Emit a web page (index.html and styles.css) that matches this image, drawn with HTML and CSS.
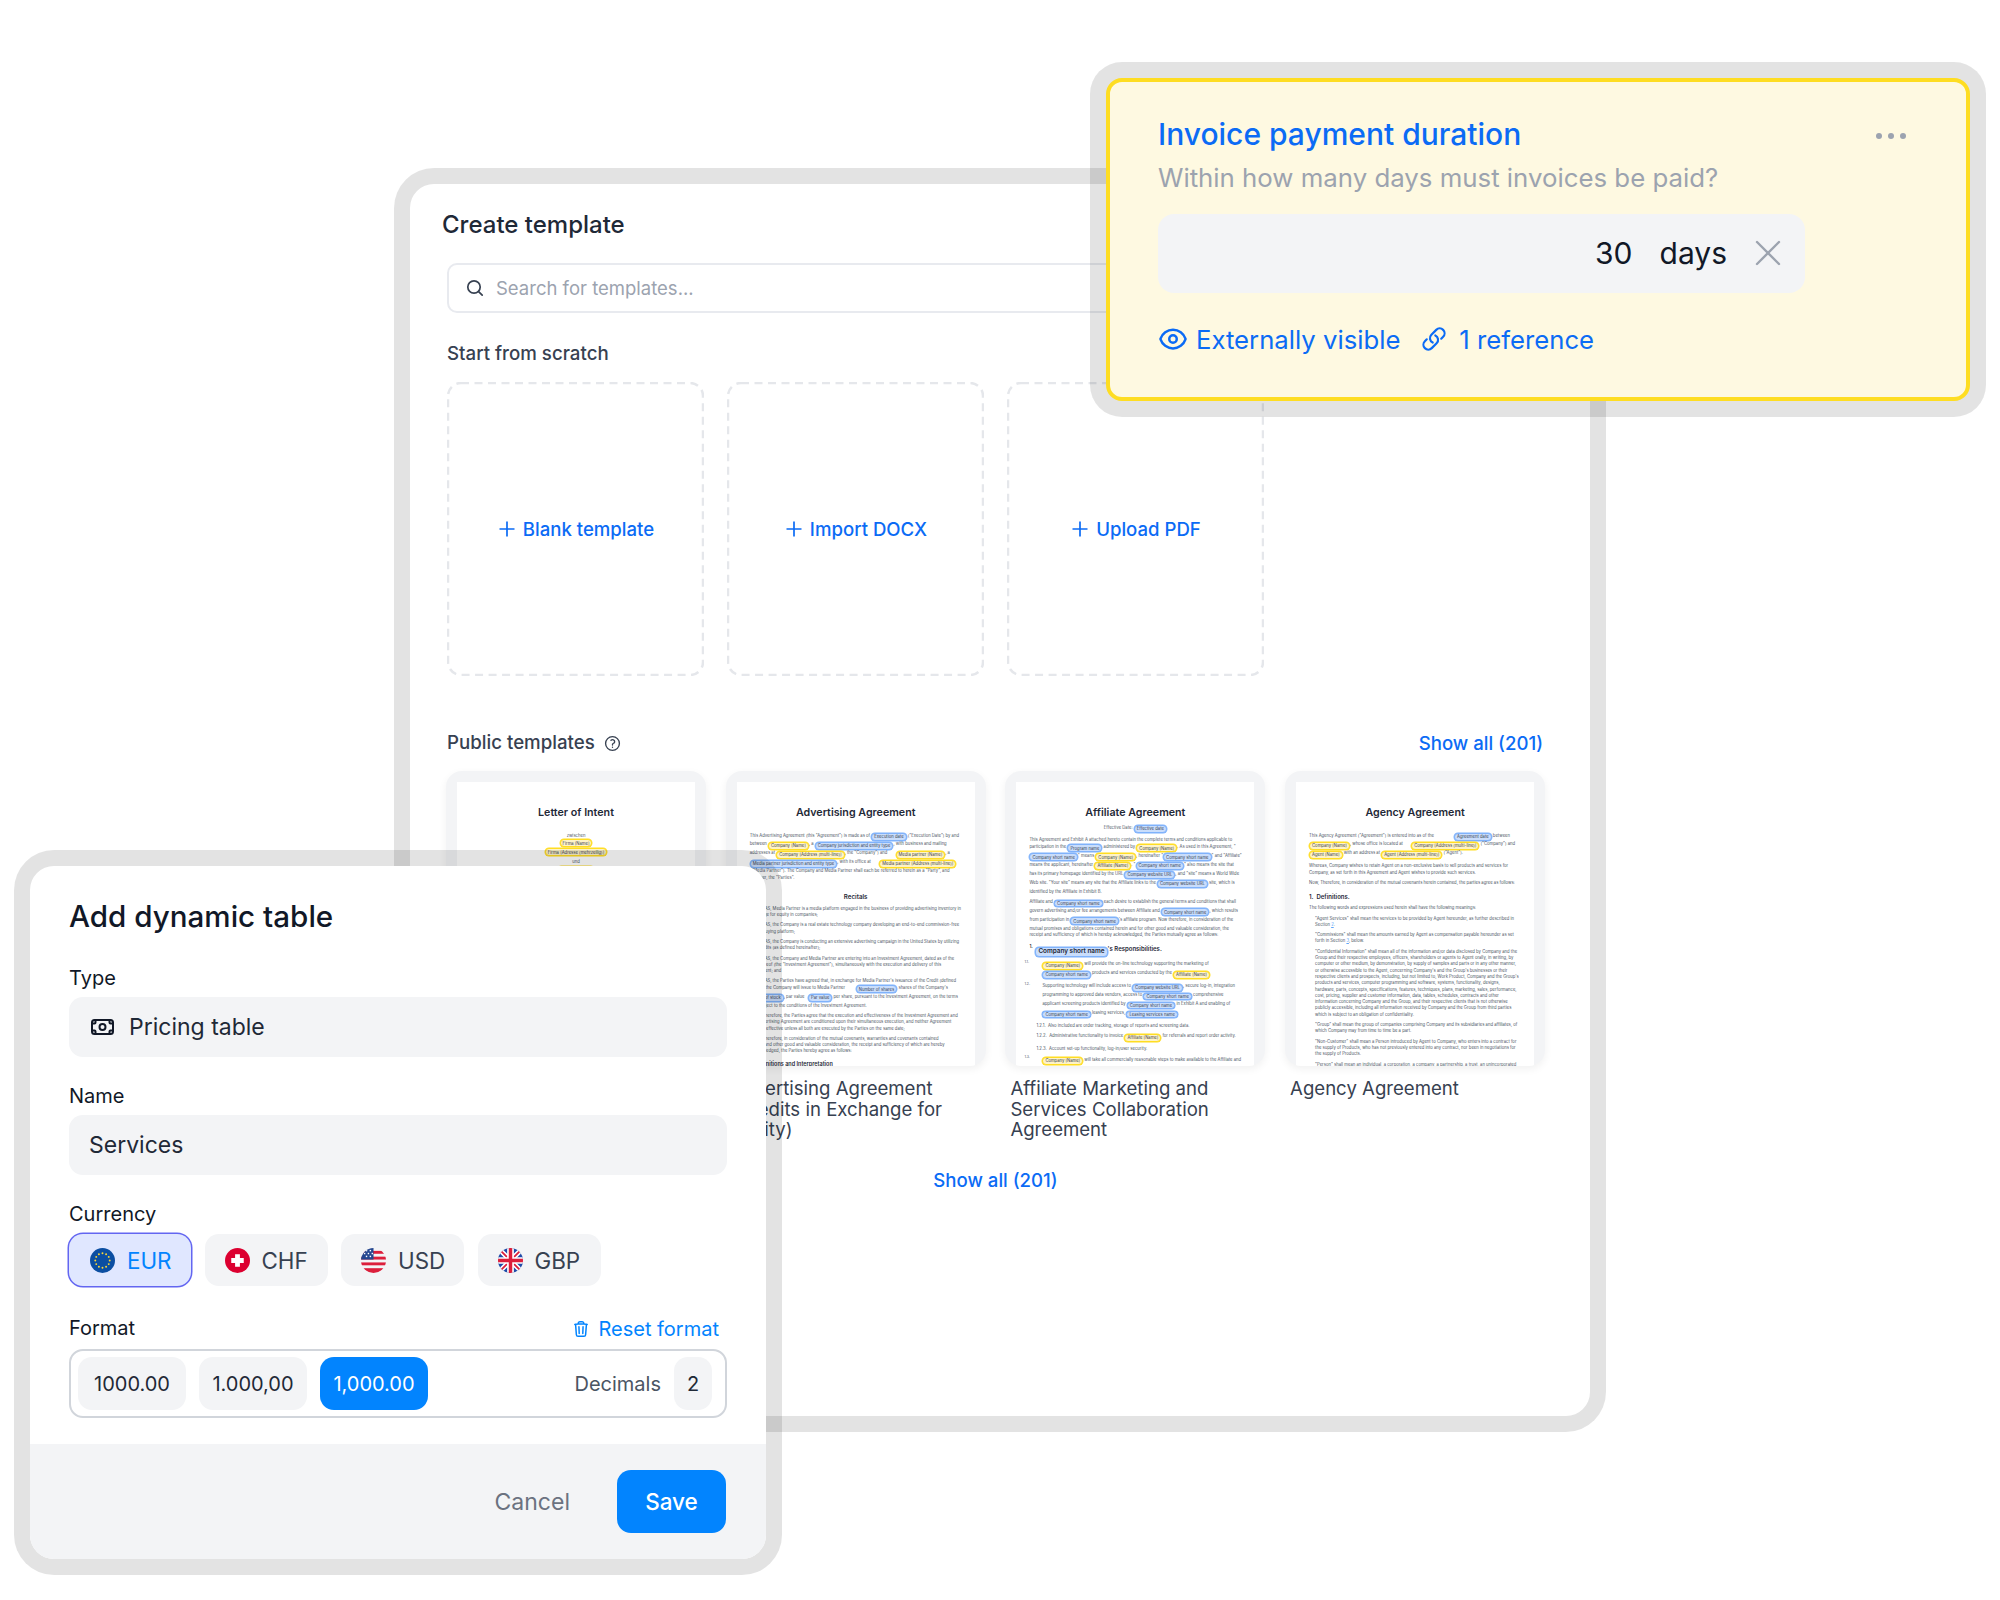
FILE: index.html
```html
<!DOCTYPE html>
<html lang="en">
<head>
<meta charset="UTF-8" />
<title>Create template</title>
<link rel="stylesheet" href="styles.css">
</head>
<body>
<div class="canvas">

  <!-- Create template window -->
  <section class="window create">
    <h2 class="create-title">Create template</h2>
    <div class="search">
      <svg class="search-icon" viewBox="0 0 20 20" fill="none" stroke="#374151" stroke-width="1.7" stroke-linecap="round"><circle cx="9" cy="9" r="6.2"/><path d="M13.6 13.6l3.6 3.6"/></svg>
      <span>Search for templates...</span>
    </div>

    <h3 class="section-label first">Start from scratch</h3>
    <div class="scratch-grid">
      <div class="scratch-card">
        <svg class="dash-frame" viewBox="0 0 257 294" fill="none"><rect x="1" y="1" width="255" height="292" rx="13"/></svg>
        <svg class="plus" viewBox="0 0 16 16" fill="none" stroke="currentColor" stroke-width="1.7"><path d="M8 0.5v15M0.5 8h15"/></svg>Blank template
      </div>
      <div class="scratch-card">
        <svg class="dash-frame" viewBox="0 0 257 294" fill="none"><rect x="1" y="1" width="255" height="292" rx="13"/></svg>
        <svg class="plus" viewBox="0 0 16 16" fill="none" stroke="currentColor" stroke-width="1.7"><path d="M8 0.5v15M0.5 8h15"/></svg>Import DOCX
      </div>
      <div class="scratch-card">
        <svg class="dash-frame" viewBox="0 0 257 294" fill="none"><rect x="1" y="1" width="255" height="292" rx="13"/></svg>
        <svg class="plus" viewBox="0 0 16 16" fill="none" stroke="currentColor" stroke-width="1.7"><path d="M8 0.5v15M0.5 8h15"/></svg>Upload PDF
      </div>
    </div>

    <div class="public-head">
      <h3 class="section-label">Public templates
        <svg class="help" viewBox="0 0 24 24" fill="none" stroke="#374151" stroke-width="1.9" stroke-linecap="round" stroke-linejoin="round"><circle cx="12" cy="12" r="9.75"/><path d="M9.879 7.519c1.171-1.025 3.071-1.025 4.242 0 1.172 1.025 1.172 2.687 0 3.712-.203.179-.43.326-.67.442-.745.361-1.45.999-1.45 1.827v.75M12 17.25h.008"/></svg>
      </h3>
      <a class="link">Show all (201)</a>
    </div>

    <div class="public-grid">
      <div class="template">
        <div class="thumb"><div class="doc center-doc">
          <h4>Letter of Intent</h4>
          <p class="between">zwischen<br><span class="chip y">Firma [Name]</span><br><span class="chip y">Firma [Adresse (mehrzeilig)]</span></p>
          <p class="und">und<br><span class="chip y">Partner [Name]</span></p>
        </div></div>
        <div class="caption">Letter of Intent</div>
      </div>

      <div class="template">
        <div class="thumb"><div class="doc">
          <h4>Advertising Agreement</h4>
          <p>This Advertising Agreement (this "Agreement") is made as of <span class="chip b">Execution date</span> ("Execution Date") by and<br>
          between <span class="chip y">Company [Name]</span>, a <span class="chip b">Company jurisdiction and entity type</span>, with business and mailing<br>
          addresses at <span class="chip y">Company [Address (multi-line)]</span>, the "Company") and &nbsp; &nbsp; &nbsp; <span class="chip y">Media partner [Name]</span>, a<br>
          <span class="chip b">Media partner jurisdiction and entity type</span>, with its office at &nbsp; &nbsp; &nbsp; <span class="chip y">Media partner [Address (multi-line)]</span><br>
          ("Media Partner"). The Company and Media Partner shall each be referred to herein as a "Party", and<br>
          together, the "Parties".</p>
          <h5>Recitals</h5>
          <p>WHEREAS, Media Partner is a media platform engaged in the business of providing advertising inventory in<br>exchange for equity in companies;</p>
          <p>WHEREAS, the Company is a real estate technology company developing an end-to-end commission-free<br>home-buying platform;</p>
          <p>WHEREAS, the Company is conducting an extensive advertising campaign in the United States by utilizing<br>the Credits (as defined hereinafter);</p>
          <p>WHEREAS, the Company and Media Partner are entering into an Investment Agreement, dated as of the<br>date hereof (the "Investment Agreement"), simultaneously with the execution and delivery of this<br>Agreement; and</p>
          <p>WHEREAS, the Parties have agreed that, in exchange for Media Partner's issuance of the Credit (defined<br>below), the Company will issue to Media Partner &nbsp; &nbsp; &nbsp; &nbsp; <span class="chip b">Number of shares</span> shares of the Company's<br>
          <span class="chip b">Class of stock</span>, par value &nbsp; <span class="chip b">Par value</span> per share, pursuant to the Investment Agreement, on the terms<br>and subject to the conditions of the Investment Agreement.</p>
          <p>NOW, Therefore, the Parties agree that the execution and effectiveness of the Investment Agreement and<br>the Advertising Agreement are conditioned upon their simultaneous execution, and neither Agreement<br>shall be effective unless all both are executed by the Parties on the same date;</p>
          <p>NOW, Therefore, in consideration of the mutual covenants, warranties and covenants contained<br>herein, and other good and valuable consideration, the receipt and sufficiency of which are hereby<br>acknowledged, the Parties hereby agree as follows:</p>
          <h6>1. Definitions and Interpretation</h6>
        </div></div>
        <div class="caption">Advertising Agreement (Credits in Exchange for Equity)</div>
      </div>

      <div class="template">
        <div class="thumb"><div class="doc">
          <h4 class="tight">Affiliate Agreement</h4>
          <p class="mid">Effective Date: <span class="chip b">Effective date</span></p>
          <p>This Agreement and Exhibit A attached hereto contain the complete terms and conditions applicable to<br>
          participation in the <span class="chip b">Program name</span> administered by <span class="chip y">Company [Name]</span>. As used in this Agreement, "<br>
          <span class="chip b">Company short name</span>" means <span class="chip y">Company [Name]</span>, hereinafter "<span class="chip b">Company short name</span>" and "Affiliate"<br>
          means the applicant, hereinafter <span class="chip y">Affiliate [Name]</span>. "<span class="chip b">Company short name</span>" also means the site that<br>
          has its primary homepage identified by the URL <span class="chip b">Company website URL</span>, and "site" means a World Wide<br>
          Web site. "Your site" means any site that the Affiliate links to the <span class="chip b">Company website URL</span> site, which is<br>
          identified by the Affiliate in Exhibit B.</p>
          <p>Affiliate and <span class="chip b">Company short name</span> each desire to establish the general terms and conditions that shall<br>
          govern advertising and/or fee arrangements between Affiliate and <span class="chip b">Company short name</span>, which results<br>
          from participation in <span class="chip b">Company short name</span>'s affiliate program. Now therefore, in consideration of the<br>
          mutual promises and obligations contained herein and for other good and valuable consideration, the<br>
          receipt and sufficiency of which is hereby acknowledged, the Parties mutually agree as follows:</p>
          <h6 class="sec"><sup class="num">1.</sup><span class="chip b big">Company short name</span>'s Responsibilities.</h6>
          <p class="ind1"><sup>1.1.</sup><span class="chip y">Company [Name]</span> will provide the on-line technology supporting the marketing of<br>
          <span class="chip b">Company short name</span> products and services conducted by the <span class="chip y">Affiliate [Name]</span></p>
          <p class="ind1"><sup>1.2.</sup>Supporting technology will include access to <span class="chip b">Company website URL</span>, secure log-in, integration<br>
          programming to approved data vendors, access to <span class="chip b">Company short name</span> comprehensive<br>
          applicant screening products identified by <span class="chip b">Company short name</span> in Exhibit A and enabling of<br>
          <span class="chip b">Company short name</span> leasing services, <span class="chip b">Leasing services name</span></p>
          <p class="ind2">1.2.1. &nbsp;Also included are order tracking, storage of reports and screening data.</p>
          <p class="ind2">1.2.2. &nbsp;Administrative functionality to invoice <span class="chip y">Affiliate [Name]</span> for referrals and report order activity.</p>
          <p class="ind2">1.2.3. &nbsp;Account set-up functionality, log-in/user security.</p>
          <p class="ind1"><sup>1.3.</sup><span class="chip y">Company [Name]</span> will take all commercially reasonable steps to make available to the Affiliate and</p>
        </div></div>
        <div class="caption">Affiliate Marketing and Services Collaboration Agreement</div>
      </div>

      <div class="template">
        <div class="thumb"><div class="doc">
          <h4>Agency Agreement</h4>
          <p>This Agency Agreement ("Agreement") is entered into as of the &nbsp; &nbsp; &nbsp; &nbsp; &nbsp; &nbsp; &nbsp; &nbsp; <span class="chip b">Agreement date</span> between<br>
          <span class="chip y">Company [Name]</span>, whose office is located at &nbsp; &nbsp; &nbsp; <span class="chip y">Company [Address (multi-line)]</span> ("Company") and<br>
          <span class="chip y">Agent [Name]</span> with an address at <span class="chip y">Agent [Address (multi-line)]</span> ("Agent").</p>
          <p>Whereas, Company wishes to retain Agent on a non-exclusive basis to sell products and services for<br>Company, as set forth in this Agreement and Agent wishes to provide such services.</p>
          <p>Now, Therefore, in consideration of the mutual covenants herein contained, the parties agree as follows:</p>
          <h6 class="sec">1. &nbsp;Definitions.</h6>
          <p>The following words and expressions used herein shall have the following meanings:</p>
          <p class="ind3">"Agent Services" shall mean the services to be provided by Agent hereunder, as further described in<br>Section <u>2</u>.</p>
          <p class="ind3">"Commissions" shall mean the amounts earned by Agent as compensation payable hereunder as set<br>forth in Section <u>3</u>, below.</p>
          <p class="ind3">"Confidential Information" shall mean all of the information and/or data disclosed by Company and the<br>
          Group and their respective employees, officers, shareholders or agents to Agent orally, in writing, by<br>
          computer or other medium, by demonstration, by supply of samples and parts or in any other manner,<br>
          or otherwise accessible to the Agent, concerning Company's and the Group's businesses or their<br>
          respective clients and prospects, including, but not limited to, Work Product, Company and the Group's<br>
          products and services, computer programming and software, systems, functionality, designs,<br>
          hardware, parts, concepts, specifications, features, techniques, plans, marketing, sales, performance,<br>
          cost, pricing, supplier and customer information, data, tables, schedules, contracts and other<br>
          information concerning Company and the Group, and their respective clients that is not otherwise<br>
          publicly accessible, including all information received by Company and the Group from third parties<br>
          which is subject to an obligation of confidentiality.</p>
          <p class="ind3">"Group" shall mean the group of companies comprising Company and its subsidiaries and affiliates, of<br>which Company may from time to time be a part.</p>
          <p class="ind3">"Non-Customer" shall mean a Person introduced by Agent to Company, who enters into a contract for<br>the supply of Products, who has not previously entered into any contract, nor been in negotiations for<br>the supply of Products.</p>
          <p class="ind3">"Person" shall mean an individual, a corporation, a company, a partnership, a trust, an unincorporated</p>
        </div></div>
        <div class="caption">Agency Agreement</div>
      </div>
    </div>

    <a class="link show-all">Show all (201)</a>
  </section>

  <!-- Invoice payment duration card -->
  <section class="window invoice">
    <div class="invoice-head">
      <h2 class="invoice-title">Invoice payment duration</h2>
      <svg class="dots" viewBox="0 0 30 6" fill="#9ca3af"><circle cx="3" cy="3" r="3"/><circle cx="15" cy="3" r="3"/><circle cx="27" cy="3" r="3"/></svg>
    </div>
    <p class="invoice-sub">Within how many days must invoices be paid?</p>
    <div class="invoice-input">
      <span>30</span>
      <span class="unit">days</span>
      <svg class="close" viewBox="0 0 26 26" fill="none" stroke="#9ca3af" stroke-width="2.4" stroke-linecap="round"><path d="M2 2l22 22M24 2L2 24"/></svg>
    </div>
    <div class="invoice-meta">
      <svg class="eye" viewBox="0 0 24 24" fill="none" stroke="currentColor" stroke-width="2" stroke-linecap="round" stroke-linejoin="round"><path d="M2.036 12.322a1.012 1.012 0 010-.639C3.423 7.51 7.36 4.5 12 4.5c4.638 0 8.573 3.007 9.963 7.178.07.207.07.431 0 .639C20.577 16.49 16.64 19.5 12 19.5c-4.638 0-8.573-3.007-9.963-7.178z"/><path d="M15 12a3 3 0 11-6 0 3 3 0 016 0z"/></svg>
      <span>Externally visible</span>
      <svg class="chain" viewBox="0 0 24 24" fill="none" stroke="currentColor" stroke-width="2" stroke-linecap="round" stroke-linejoin="round"><path d="M13.19 8.688a4.5 4.5 0 011.242 7.244l-4.5 4.5a4.5 4.5 0 01-6.364-6.364l1.757-1.757m13.35-.622l1.757-1.757a4.5 4.5 0 00-6.364-6.364l-4.5 4.5a4.5 4.5 0 001.242 7.244"/></svg>
      <span>1 reference</span>
    </div>
  </section>

  <!-- Add dynamic table dialog -->
  <section class="window dialog">
    <div class="dialog-body">
      <h2 class="dialog-title">Add dynamic table</h2>

      <label class="field-label">Type</label>
      <div class="field">
        <svg class="note" viewBox="0 0 23 16" fill="none" stroke="#111827" stroke-width="2"><rect x="1" y="1" width="21" height="14" rx="2.5"/><circle cx="11.5" cy="8" r="3"/><path d="M1 4.5h2.5a1 1 0 0 0 1-1V1M22 4.5h-2.5a1 1 0 0 1-1-1V1M1 11.500h2.500a1 1 0 0 1 1 1V15M22 11.500h-2.500a1 1 0 0 0-1 1V15"/></svg>
        Pricing table
      </div>

      <label class="field-label">Name</label>
      <div class="field">Services</div>

      <label class="field-label">Currency</label>
      <div class="currencies">
        <div class="currency active">
          <svg class="flag" viewBox="0 0 26 26"><circle cx="13" cy="13" r="13" fill="#0b4ea2"/><g fill="#fdd835"><circle cx="13" cy="5.500" r="1"/><circle cx="16.750" cy="6.500" r="1"/><circle cx="19.500" cy="9.250" r="1"/><circle cx="20.500" cy="13" r="1"/><circle cx="19.500" cy="16.750" r="1"/><circle cx="16.750" cy="19.500" r="1"/><circle cx="13" cy="20.500" r="1"/><circle cx="9.250" cy="19.500" r="1"/><circle cx="6.500" cy="16.750" r="1"/><circle cx="5.500" cy="13" r="1"/><circle cx="6.500" cy="9.250" r="1"/><circle cx="9.250" cy="6.500" r="1"/></g></svg>
          EUR
        </div>
        <div class="currency">
          <svg class="flag" viewBox="0 0 26 26"><circle cx="13" cy="13" r="13" fill="#dc0030"/><path fill="#fff" d="M10.500 6.500h5v4h4v5h-4v4h-5v-4h-4v-5h4z"/></svg>
          CHF
        </div>
        <div class="currency">
          <svg class="flag" viewBox="0 0 26 26"><clipPath id="usClip"><circle cx="13" cy="13" r="13"/></clipPath><g clip-path="url(#usClip)"><rect width="26" height="26" fill="#f3f4f6"/><g fill="#dc1f3c"><rect y="3" width="26" height="3"/><rect y="9" width="26" height="3"/><rect y="15" width="26" height="3"/><rect y="21" width="26" height="5"/></g><rect width="13" height="12" fill="#24468f"/><g fill="#fff"><rect x="5" y="2" width="1.500" height="1.500"/><rect x="9" y="2" width="1.500" height="1.500"/><rect x="3" y="5" width="1.500" height="1.500"/><rect x="7" y="5" width="1.500" height="1.500"/><rect x="11" y="5" width="1.500" height="1.500"/><rect x="5" y="8" width="1.500" height="1.500"/><rect x="9" y="8" width="1.500" height="1.500"/></g></g></svg>
          USD
        </div>
        <div class="currency">
          <svg class="flag" viewBox="0 0 26 26"><clipPath id="gbClip"><circle cx="13" cy="13" r="13"/></clipPath><g clip-path="url(#gbClip)"><rect width="26" height="26" fill="#1f4aa8"/><path d="M0 0l26 26M26 0L0 26" stroke="#fff" stroke-width="5"/><path d="M0 0l26 26M26 0L0 26" stroke="#dc1f3c" stroke-width="1.800"/><path d="M13 0v26M0 13h26" stroke="#fff" stroke-width="7"/><path d="M13 0v26M0 13h26" stroke="#dc1f3c" stroke-width="3.600"/></g></svg>
          GBP
        </div>
      </div>

      <div class="format-head">
        <label class="field-label">Format</label>
        <a class="reset">
          <svg class="trash" viewBox="0 0 24 24" fill="none" stroke="currentColor" stroke-width="2" stroke-linecap="round" stroke-linejoin="round"><path d="M14.740 9l-.346 9m-4.788 0L9.260 9m9.968-3.210c.342.052.682.107 1.022.166m-1.022-.165L18.160 19.673a2.250 2.250 0 01-2.244 2.077H8.084a2.250 2.250 0 01-2.244-2.077L4.772 5.790m14.456 0a48.108 48.108 0 00-3.478-.397m-12 .562c.34-.059.68-.114 1.022-.165m0 0a48.110 48.110 0 013.478-.397m7.500 0v-.916c0-1.180-.91-2.164-2.090-2.201a51.964 51.964 0 00-3.320 0c-1.180.037-2.090 1.022-2.090 2.201v.916m7.500 0a48.667 48.667 0 00-7.500 0"/></svg>
          Reset format
        </a>
      </div>
      <div class="format-box">
        <div class="pill">1000.00</div>
        <div class="pill">1.000,00</div>
        <div class="pill selected">1,000.00</div>
        <span class="decimals">Decimals</span>
        <div class="pill small">2</div>
      </div>
    </div>

    <div class="dialog-footer">
      <a class="cancel">Cancel</a>
      <a class="save">Save</a>
    </div>
  </section>

</div>
</body>
</html>
```

FILE: styles.css
```css
/* Reset */
*, *::before, *::after {
  box-sizing: border-box;
}

body {
  margin: 0;
  background: #fff;
  font-family: 'Inter', 'Liberation Sans', sans-serif;
  color: #111827;
}

h2, h3, h4, h5, h6, p {
  margin: 0;
}

.canvas {
  position: relative;
  width: 2000px;
  height: 1600px;
  overflow: hidden;
}

/* Free floating windows, the ring is see-through */
.window {
  position: absolute;
  background: #fff;
  border-radius: 24px;
  box-shadow: 0 0 0 16px rgba(0,0,0,0.11);
}

/* Create template */
.create {
  left: 410px;
  top: 184px;
  width: 1180px;
  height: 1232px;
  padding: 25px 46px 0 37px;
}

.create-title {
  margin-left: -5px;
  font-size: 24px;
  line-height: 32px;
  font-weight: 450;
  color: #1f2937;
}

.search {
  display: flex;
  align-items: center;
  gap: 11px;
  height: 50px;
  margin-top: 22px;
  padding-left: 16px;
  border: 2px solid #e8eaef;
  border-radius: 10px;
  font-size: 18.5px;
  color: #9ca3af;
}

.search-icon {
  width: 20px;
  height: 20px;
}

.section-label {
  font-size: 18.7px;
  line-height: 24px;
  font-weight: 500;
  color: #374151;
}
.section-label.first {
  margin-top: 29px;
}

.scratch-grid {
  display: grid;
  grid-template-columns: repeat(3, 257px);
  gap: 23px;
  margin-top: 16px;
}

.scratch-card {
  position: relative;
  display: flex;
  align-items: center;
  justify-content: center;
  gap: 8px;
  height: 294px;
  padding-left: 2px;
  font-size: 18.6px;
  font-weight: 500;
  color: #0b6bf5;
}

/* dashes of the reference are longer than a css dashed border */
.dash-frame {
  position: absolute;
  left: 0;
  top: 0;
  width: 257px;
  height: 294px;
  stroke: #e5e7eb;
  stroke-width: 2.5;
  stroke-dasharray: 8 5.5;
}

.plus {
  width: 16px;
  height: 16px;
}

.public-head {
  display: flex;
  justify-content: space-between;
  margin-top: 55px;
  margin-right: 1px;
}

.help {
  width: 17px;
  height: 17px;
  margin-left: 4px;
  vertical-align: -3px;
}

.link {
  font-size: 18.6px;
  line-height: 24px;
  font-weight: 500;
  color: #0b6bf5;
}

.public-grid {
  display: grid;
  grid-template-columns: repeat(4, 260px);
  gap: 19.7px;
  margin-top: 16px;
  margin-left: -1px;
}

.thumb {
  height: 295px;
  padding: 11px 11px 0;
  background: #f3f4f6;
  border-radius: 16px;
  box-shadow: 0 3px 8px rgba(0,0,0,0.06);
  overflow: hidden;
}

.caption {
  margin-top: 12px;
  padding: 0 5px;
  height: 64px;
  font-size: 18.6px;
  line-height: 20.6px;
  color: #374151;
}

.show-all {
  display: block;
  margin-top: 26px;
  text-align: center;
}

/* Small page previews */
.doc {
  height: 100%;
  padding: 23px 13px 0;
  background: #fff;
  overflow: hidden;
  font-size: 4.2px;
  line-height: 6.3px;
  color: #4b5563;
  white-space: nowrap;
}

.doc h4 {
  font-size: 10.7px;
  line-height: 16px;
  font-weight: 600;
  color: #1f2937;
  text-align: center;
  margin-bottom: 11.5px;
}
.doc h4.tight {
  margin-bottom: 3.5px;
}

.doc h5 {
  font-size: 6.2px;
  line-height: 8px;
  font-weight: 600;
  color: #1f2937;
  text-align: center;
  margin: 12px 0 4.8px;
}

.doc h6 {
  font-size: 5.5px;
  line-height: 8px;
  font-weight: 600;
  color: #1f2937;
  margin-top: 5px;
}
.doc h6.sec {
  font-size: 6px;
  margin: 7px 0 4px;
}

.doc p {
  margin-bottom: 4px;
}

.doc sup {
  display: inline-block;
  width: 9px;
  font-size: 3.5px;
  line-height: 0;
}
.doc sup.num {
  width: 6px;
  font-size: 4.5px;
}

.doc u {
  color: #60a5fa;
}

.doc .mid {
  text-align: center;
}

.doc .ind1 {
  padding-left: 13px;
  text-indent: -9px;
}
.doc .ind2 { padding-left: 7px; }
.doc .ind3 { padding-left: 6px; }

.center-doc .between {
  margin-bottom: 2px;
  text-align: center;
}
.center-doc .und {
  text-align: center;
}

.chip {
  display: inline-block;
  margin: 0.6px 0;
  padding: 0.2px 2px;
  border: 1px solid;
  border-radius: 4px;
  line-height: 5.4px;
  text-indent: 0;
  vertical-align: -1.5px;
  color: #374151;
}
.chip.y {
  border-color: #ffdd22;
  background: #fef3c7;
  box-shadow: 0 0 0 0.5px #ffdd22;
}
.chip.b {
  border-color: #7fb2fb;
  background: #c9ddfb;
  box-shadow: 0 0 0 0.5px #7fb2fb;
}
.chip.big {
  font-size: 6.4px;
  line-height: 7.5px;
  font-weight: 600;
  color: #1f2937;
}

/* Invoice card */
.invoice {
  left: 1106px;
  top: 78px;
  width: 864px;
  height: 323px;
  padding: 34px 0 0 48px;
  background: #fef9e1;
  border: 4px solid #fedd22;
  border-radius: 16px;
}

.invoice-head {
  display: flex;
  justify-content: space-between;
  align-items: center;
  padding-right: 60px;
}

.invoice-title {
  font-size: 30px;
  line-height: 36px;
  font-weight: 500;
  color: #0b6bf5;
}

.dots {
  width: 30px;
  height: 6px;
  margin-top: 3px;
}

.invoice-sub {
  margin-top: 10px;
  font-size: 25.8px;
  line-height: 32px;
  color: #9ca3af;
}

.invoice-input {
  display: flex;
  align-items: center;
  justify-content: flex-end;
  width: 647px;
  height: 79px;
  margin-top: 20px;
  padding: 0 24px 2px 0;
  background: #f3f4f6;
  border-radius: 16px;
  font-size: 30px;
  color: #111827;
}

.unit {
  margin-left: 27px;
}

.close {
  width: 26px;
  height: 26px;
  margin-left: 28px;
}

.invoice-meta {
  display: flex;
  align-items: center;
  height: 34px;
  margin-top: 29px;
  font-size: 25.7px;
  color: #0b6bf5;
}

.eye {
  width: 30px;
  height: 30px;
  margin-right: 8px;
}

.chain {
  width: 26px;
  height: 26px;
  margin: 0 12px 0 21px;
}

/* Add dynamic table dialog */
.dialog {
  left: 30px;
  top: 866px;
  width: 736px;
  height: 693px;
}

.dialog-body {
  height: 578px;
  padding: 32px 39px 0;
}

.dialog-title {
  font-size: 29.6px;
  line-height: 36px;
  font-weight: 450;
  color: #111827;
  margin-bottom: 32px;
}

.field-label {
  display: block;
  font-size: 20px;
  line-height: 24px;
  font-weight: 400;
  color: #111827;
}

.field {
  display: flex;
  align-items: center;
  gap: 15px;
  height: 60px;
  margin: 7px 0 27px;
  padding-left: 20px;
  background: #f3f4f6;
  border-radius: 14px;
  font-size: 23px;
  color: #1f2937;
}

.note {
  width: 23px;
  height: 16px;
  margin-left: 2px;
}

.currencies {
  display: flex;
  gap: 13.5px;
  margin-top: 8px;
}

.currency {
  display: flex;
  align-items: center;
  gap: 12px;
  width: 123px;
  height: 52px;
  padding-left: 20px;
  background: #f3f4f6;
  border-radius: 14px;
  font-size: 22.4px;
  color: #374151;
}

.currency.active {
  width: 122px;
  padding-left: 21px;
  background: #e0e7ff;
  color: #0284fe;
  box-shadow: 0 0 0 1.5px #6366f1;
}

.flag {
  width: 25px;
  height: 25px;
}

.format-head {
  display: flex;
  justify-content: space-between;
  align-items: center;
  margin-top: 30px;
  padding-right: 8px;
}

.reset {
  display: flex;
  align-items: center;
  gap: 8px;
  margin: 1px 0 -1px;
  font-size: 20px;
  color: #0284fe;
}

.trash {
  width: 18px;
  height: 20px;
}

.format-box {
  display: flex;
  align-items: center;
  gap: 13px;
  height: 69px;
  margin-top: 9px;
  padding: 0 13px 0 7px;
  border: 2px solid #d1d5db;
  border-radius: 14px;
}

.pill {
  display: flex;
  align-items: center;
  justify-content: center;
  width: 108px;
  height: 53px;
  background: #f3f4f6;
  border-radius: 14px;
  font-size: 20px;
  color: #1f2937;
}

.pill.selected {
  background: #0284fe;
  color: #fff;
}

.pill.small {
  width: 38px;
}

.decimals {
  margin-left: auto;
  font-size: 20px;
  color: #4b5563;
}

.dialog-footer {
  display: flex;
  justify-content: flex-end;
  align-items: center;
  gap: 47px;
  height: 115px;
  padding-right: 40px;
  background: #f3f4f6;
  border-radius: 0 0 24px 24px;
}

.cancel {
  font-size: 23px;
  color: #6b7280;
}

.save {
  display: flex;
  align-items: center;
  justify-content: center;
  width: 109px;
  height: 63px;
  background: #0284fe;
  border-radius: 14px;
  font-size: 22.5px;
  font-weight: 500;
  color: #fff;
}
```
